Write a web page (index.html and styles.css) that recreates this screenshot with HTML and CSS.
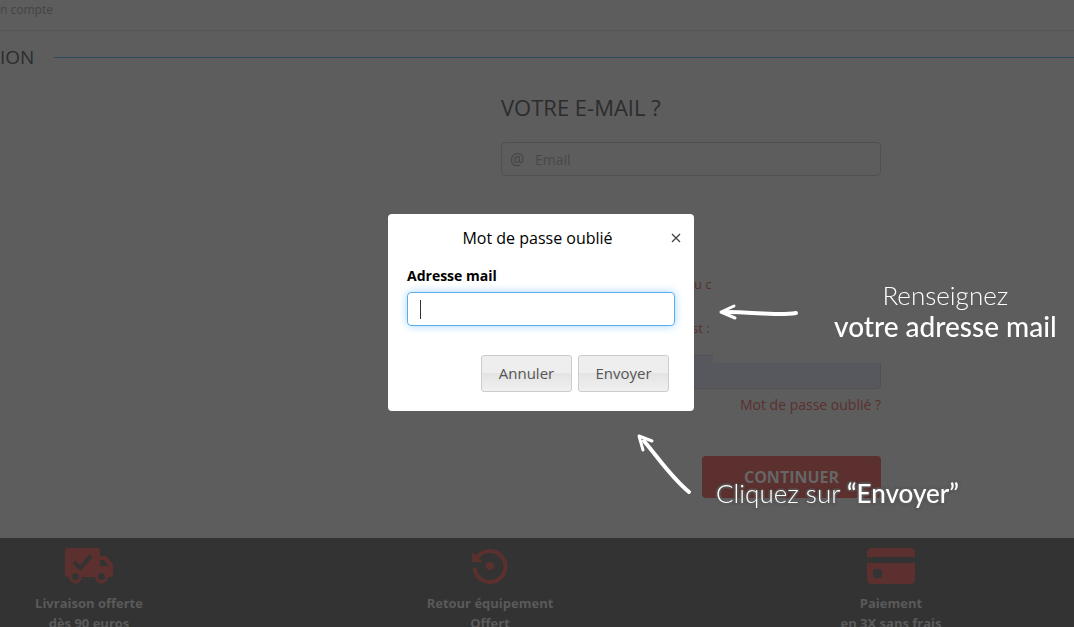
FILE: index.html
```html
<!DOCTYPE html>
<html lang="fr">
<head>
    <meta charset="UTF-8">
    <meta name="viewport" content="width=device-width, initial-scale=1.0">
    <title>Mot de passe oublié</title>
    <link rel="stylesheet" href="styles.css">
</head>
<body>
    <nav class="breadcrumb">n compte</nav>

    <main>
        <h1 class="page-title">ION</h1>

        <form class="login-form">
            <h2><label for="email">VOTRE E-MAIL ?</label></h2>
            <div class="email-field">
                <span class="at">@</span>
                <input type="email" id="email" placeholder="Email">
            </div>
            <p class="hint first">u c</p>
            <label class="hint second" for="password">st :</label>
            <div class="password-field">
                <input type="password" id="password">
            </div>
            <a href="#" class="forgot">Mot de passe oublié ?</a>
            <button type="submit" class="continue">CONTINUER</button>
        </form>
    </main>

    <footer class="footer">
        <div class="service">
            <svg width="50" height="36" viewBox="0 0 50 36">
                <path fill="#5b302e" fill-rule="evenodd" d="M4 0H33Q36 0 36 3V8H40Q42 8 43 9L48 15Q49 16 49 18V26Q50 29 47 29H44A6.500 6.500 0 0 1 31 29H18A6.500 6.500 0 0 1 5 29H4Q1 29 1 26V3Q1 0 4 0ZM36 12V18H45L40 12ZM11.500 25A3.500 3.500 0 1 0 11.500 32A3.500 3.500 0 1 0 11.500 25ZM37.500 25A3.500 3.500 0 1 0 37.500 32A3.500 3.500 0 1 0 37.500 25Z"/>
                <path d="M10 14l6 6L27 8" fill="none" stroke="#333" stroke-width="4"/>
            </svg>
            <p>Livraison offerte<br>dès 90 euros</p>
        </div>
        <div class="service">
            <svg width="36" height="36" viewBox="0 0 36 36">
                <path d="M5 10A15.500 15.500 0 1 1 2.500 20" fill="none" stroke="#5b302e" stroke-width="4"/>
                <path d="M0 4L3 7L6 6L5 10L10 12L9 14H0Z" fill="#5b302e"/>
                <circle cx="18" cy="18" r="4" fill="#5b302e"/>
            </svg>
            <p>Retour équipement<br>Offert</p>
        </div>
        <div class="service">
            <svg width="48" height="36" viewBox="0 0 48 36">
                <path fill="#5b302e" d="M5 0H43Q48 0 48 5V9H0V5Q0 0 5 0ZM0 15H48V31Q48 36 43 36H5Q0 36 0 31Z"/>
                <rect x="6" y="21" width="9" height="9" rx="3" fill="#333"/>
            </svg>
            <p>Paiement<br>en 3X sans frais</p>
        </div>
    </footer>

    <div class="overlay">
        <form class="modal" role="dialog" aria-labelledby="modalTitle">
            <div class="modal-header">
                <h3 id="modalTitle">Mot de passe oublié</h3>
                <button type="button" class="close" aria-label="Fermer">
                    <svg width="10" height="10" viewBox="0 0 10 10"><path d="M1 1l8 8M9 1l-8 8" stroke="#444" stroke-width="1.300"/></svg>
                </button>
            </div>
            <label for="resetEmail">Adresse mail</label>
            <div class="reset-field">
                <input type="text" id="resetEmail">
            </div>
            <div class="modal-actions">
                <button type="button">Annuler</button>
                <button type="submit">Envoyer</button>
            </div>
        </form>
    </div>

    <svg class="arrow arrow-mail" width="80" height="18" viewBox="0 0 80 18">
        <path d="M77 9C58 12 36 8 7 8" stroke-width="4"/>
        <path d="M15 2L2 8L16 14" stroke-width="3"/>
    </svg>
    <p class="note note-mail">Renseignez<br><b>votre adresse mail</b></p>

    <svg class="arrow arrow-send" width="56" height="62" viewBox="0 0 56 62">
        <path d="M53 58C35 43 24 26 8 7" stroke-width="4"/>
        <path d="M7 16L3 2L16 7" stroke-width="3"/>
    </svg>
    <p class="note note-send">Cliquez sur <b>“Envoyer”</b></p>
</body>
</html>
```
FILE: styles.css
```css
* {
    box-sizing: border-box;
}
body {
    font-family: "Open Sans", "Noto Sans", sans-serif;
    font-size: 13px;
    line-height: 20px;
    min-height: 100vh;
    margin: 0;
    background: #5d5d5d;
    color: #2c2c2c;
    overflow: hidden;
}
h1, h2, h3, p {
    margin: 0;
}
h1, h2, h3 {
    font-weight: normal;
}
input, button {
    font-family: inherit;
}
.breadcrumb {
    height: 31px;
    border-bottom: 1px solid #555;
    color: #444;
    font-size: 12px;
}
.page-title {
    display: flex;
    align-items: center;
    gap: 20px;
    margin-top: 11px;
    font-size: 19px;
    line-height: 30px;
}
.page-title::after {
    content: "";
    flex: 1;
    height: 1px;
    background: #2b4b5e;
}
.login-form {
    display: flex;
    flex-direction: column;
    width: 380px;
    margin: 20px 193px 40px auto;
}
.login-form h2 {
    font-size: 22px;
    line-height: 30px;
}
.email-field {
    display: flex;
    align-items: center;
    height: 34px;
    margin-top: 20px;
    padding: 0 8px;
    border: 1px solid #505050;
    border-radius: 4px;
}
.at {
    width: 25px;
    color: #444;
    font-size: 16px;
}
.email-field input {
    flex: 1;
    padding: 0;
    border: none;
    outline: none;
    background: none;
    font-size: 14px;
}
.email-field input::placeholder {
    color: #484848;
}
.hint {
    margin-left: 193px;
    color: #5b302e;
}
.hint.first {
    margin-top: 98px;
}
.hint.second {
    margin-top: 24px;
    margin-left: 191px;
}
.password-field {
    position: relative;
    height: 34px;
    margin-top: 17px;
}
.password-field input {
    width: 100%;
    height: 34px;
    border: 1px solid #505050;
    border-radius: 4px;
    background: #56585d;
}
.password-field::after {
    content: "";
    position: absolute;
    top: 0;
    right: 0;
    width: 168px;
    height: 8px;
    background: #5d5d5d;
}
.forgot {
    align-self: flex-end;
    margin-top: 6px;
    color: #5b302e;
    font-size: 14px;
    text-decoration: none;
}
.continue {
    align-self: flex-end;
    width: 179px;
    height: 42px;
    margin-top: 41px;
    border: none;
    border-radius: 4px;
    background: #5b302e;
    color: #666;
    font-size: 16px;
    font-weight: bold;
}
.footer {
    display: grid;
    grid-template-columns: 178px 1fr 178px;
    min-height: 89px;
    padding: 10px 94px 0 0;
    background: #333;
    color: #5a5a5a;
    font-weight: bold;
    text-align: center;
}
.service svg {
    display: block;
    margin: 0 auto 9px;
}
.overlay {
    position: fixed;
    inset: 0;
    display: flex;
    align-items: center;
    justify-content: center;
    padding: 0 0 2px 8px;
}
.modal {
    width: 306px;
    padding: 9px 19px 19px;
    border-radius: 4px;
    background: #fff;
    color: #000;
    font-size: 14px;
}
.modal-header {
    display: flex;
    align-items: center;
    margin: 0 -9px 13px 0;
}
.modal-header h3 {
    flex: 1;
    font-size: 16px;
    line-height: 30px;
    text-align: center;
}
.close {
    width: 16px;
    height: 16px;
    padding: 3px;
    border: none;
    background: none;
}
.close svg {
    display: block;
}
.modal label {
    display: block;
    font-weight: bold;
}
.reset-field {
    display: flex;
    align-items: center;
    height: 34px;
    margin-top: 6px;
    padding-left: 12px;
    border: 1px solid #58aeea;
    border-radius: 4px;
    box-shadow: 0 0 8px #a6d5f8;
}
/* text cursor */
.reset-field::before {
    content: "";
    width: 1px;
    height: 19px;
    background: #333;
}
.reset-field input {
    flex: 1;
    border: none;
    outline: none;
    background: none;
}
.modal-actions {
    display: flex;
    justify-content: flex-end;
    gap: 6px;
    margin: 29px 6px 0 0;
}
.modal-actions button {
    width: 91px;
    height: 37px;
    padding: 0 0 2px;
    border: 1px solid #ccc;
    border-radius: 3px;
    background: linear-gradient(#eee 50%, #e4e4e4 50%, #f0f0f0);
    color: #555;
    font-size: 15px;
}
.arrow {
    position: absolute;
    fill: none;
    stroke: #fff;
    stroke-linecap: round;
    stroke-linejoin: round;
}
.arrow-mail {
    left: 719px;
    top: 304px;
}
.arrow-send {
    left: 636px;
    top: 434px;
}
.note {
    position: absolute;
    color: #fff;
    font-family: Lato, sans-serif;
    font-size: 26px;
    font-weight: 300;
    line-height: 31px;
    text-align: center;
    white-space: nowrap;
}
.note b {
    font-weight: 500;
}
.note-mail {
    left: 834px;
    top: 280px;
}
.note-mail b {
    font-size: 28px;
}
.note-send {
    left: 716px;
    top: 478px;
    text-shadow: 0 0 3px #5d5d5d, 0 0 3px #5d5d5d, 0 0 3px #5d5d5d, 0 0 3px #5d5d5d, 0 0 3px #5d5d5d, 0 0 3px #5d5d5d;
}
```
